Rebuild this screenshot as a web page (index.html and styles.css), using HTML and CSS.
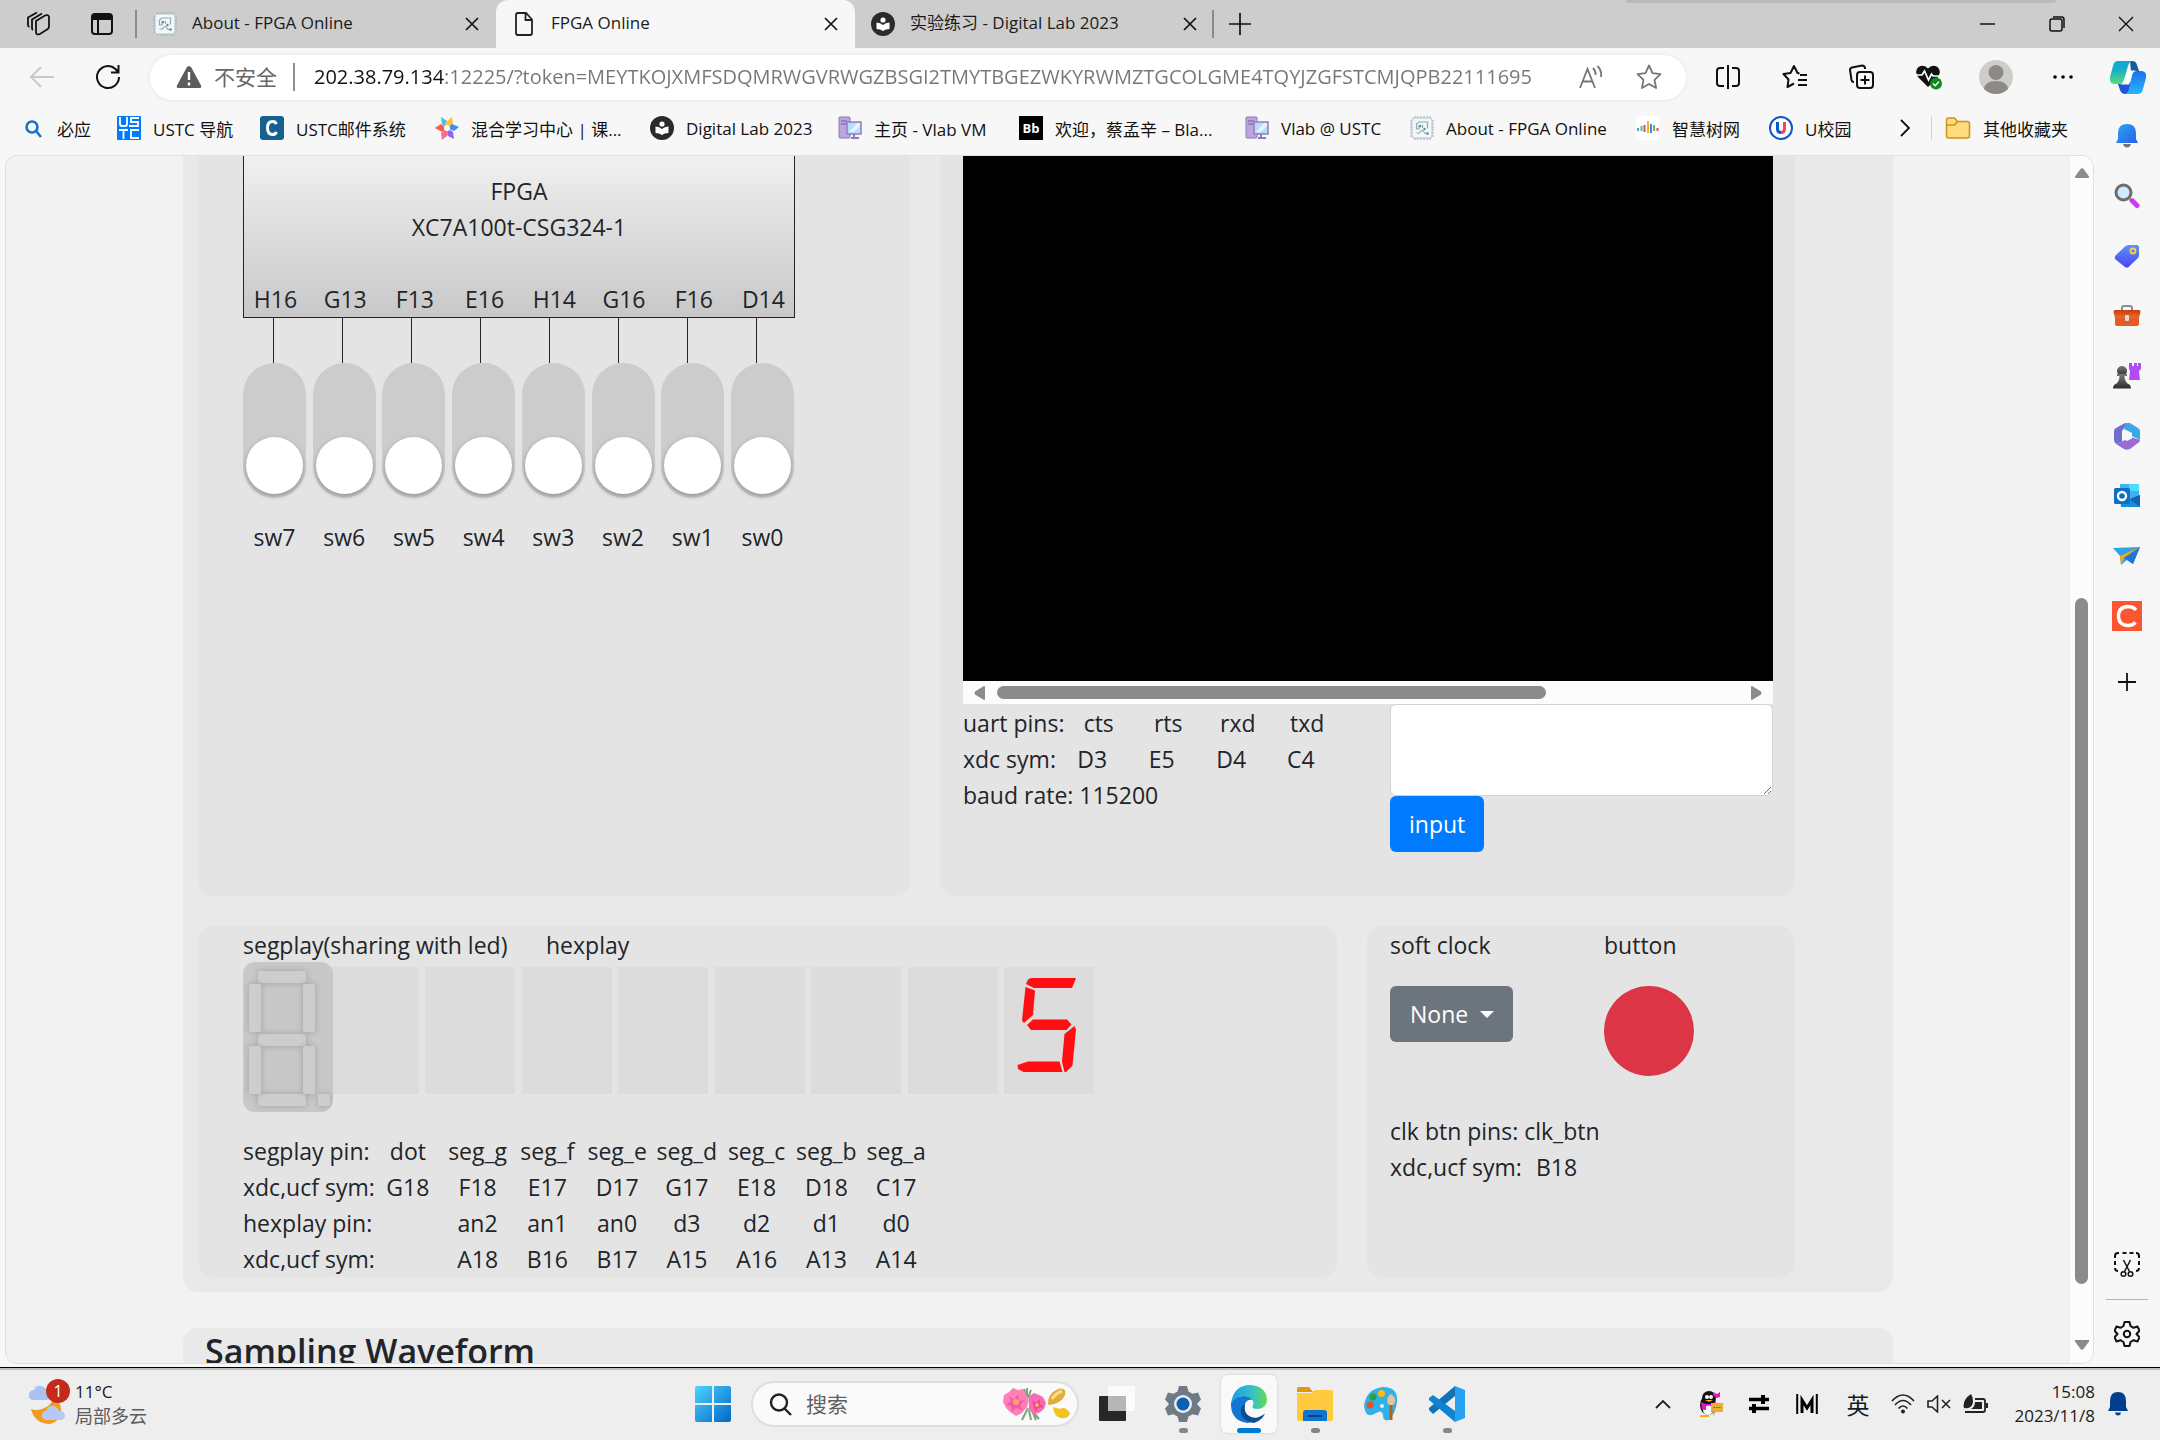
FILE: index.html
```html
<!DOCTYPE html>
<html lang="zh-CN">
<head>
<meta charset="utf-8">
<title>FPGA Online</title>
<link rel="stylesheet" href="styles.css">
</head>
<body>
<svg class="defs" aria-hidden="true">
  <defs>
    <linearGradient id="blueGrad" x1="0" y1="0" x2="1" y2="1"><stop offset="0" stop-color="#4cd3ff"/><stop offset="1" stop-color="#0067c6"/></linearGradient>
    <linearGradient id="bellGrad" x1="0" y1="0" x2="1" y2="1"><stop offset="0" stop-color="#28a9ea"/><stop offset="1" stop-color="#2a5df0"/></linearGradient>
    <linearGradient id="tagGrad" x1="0" y1="0" x2="0" y2="1"><stop offset="0" stop-color="#5b95fb"/><stop offset="1" stop-color="#4a43ee"/></linearGradient>
    <linearGradient id="caseGrad" x1="0" y1="0" x2="0" y2="1"><stop offset="0" stop-color="#c4410b"/><stop offset="1" stop-color="#f06a30"/></linearGradient>
    <linearGradient id="edgeTop" x1="0" y1="0" x2="1" y2="0"><stop offset="0" stop-color="#1b9de2"/><stop offset=".6" stop-color="#35c1c8"/><stop offset="1" stop-color="#66dc4c"/></linearGradient>
    <linearGradient id="copA" x1="0" y1="0" x2="0" y2="1"><stop offset="0" stop-color="#12a5d8"/><stop offset=".4" stop-color="#18afc8"/><stop offset="1" stop-color="#55dd78"/></linearGradient>
    <linearGradient id="copB" x1="0" y1="0" x2="0" y2="1"><stop offset="0" stop-color="#1c6ff0"/><stop offset="1" stop-color="#25b8fb"/></linearGradient>
    <linearGradient id="darkGrad" x1="0" y1="0" x2="0" y2="1"><stop offset="0" stop-color="#7a7a7a"/><stop offset="1" stop-color="#2d2d2d"/></linearGradient>
    <symbol id="i-chip" viewBox="0 0 24 24"><path d="M5 0v24M8 0v24M11 0v24M14 0v24M17 0v24M20 0v24M0 5h24M0 8h24M0 11h24M0 14h24M0 17h24M0 20h24" stroke="#a3adb2" stroke-width="1"/><rect x="2" y="2" width="20" height="20" rx="2" fill="#f1f8fa" stroke="#b4c2c8" stroke-width="1"/><path d="M17.500 12.500V6H9L6.500 8v5H9v-3.500M6.500 17h3l2-2.500h1.500l2 3H17M12.500 9v3" fill="none" stroke="#93a7b0" stroke-width="1.200"/><circle cx="10" cy="10" r="1.200" fill="#5b8796"/><circle cx="14.500" cy="13" r="1.200" fill="#5b8796"/><circle cx="17.500" cy="17.500" r="1.300" fill="#5b8796"/></symbol>
    <symbol id="i-lab" viewBox="0 0 24 24"><circle cx="12" cy="12" r="12" fill="#2b2b2d"/><circle cx="12" cy="8" r="2.600" fill="#fff"/><path d="M5.500 10.500Q9.500 10.500 12 13Q14.500 10.500 18.500 10.500V17Q14.500 17 12 19Q9.500 17 5.500 17Z" fill="#fff"/></symbol>
    <symbol id="i-x" viewBox="0 0 14 14"><path d="M1 1l12 12M13 1L1 13" stroke="#111" stroke-width="1.700" fill="none"/></symbol>
    <symbol id="i-vm" viewBox="0 0 24 24"><rect x="1" y="1" width="11" height="21" rx="1" fill="#bda4dc" stroke="#8f79b8"/><path d="M3 5h6M3 8h6" stroke="#6b5a96"/><rect x="9" y="6" width="14" height="12" fill="#b9dcfb" stroke="#8f7fc0" stroke-width="1.500"/><path d="M11 16l8-9h3v3l-6 6z" fill="#e4f3ff"/><path d="M13 22h8M16 18v4" stroke="#8f79b8" stroke-width="2"/></symbol>
    <symbol id="i-folder" viewBox="0 0 26 24"><path d="M1.500 20V4Q1.500 2 3.500 2h6l3 3.500H22.500Q24.500 5.500 24.500 7.500V20Q24.500 22 22.500 22H3.500Q1.500 22 1.500 20Z" fill="#ffdb7c" stroke="#c6951c" stroke-width="1.500"/><path d="M1.500 9h8l3-3.500" fill="none" stroke="#c6951c" stroke-width="1.500"/></symbol>
  </defs>
</svg>

<div class="desktop">
  <section class="browser">
    <header class="tabstrip">
      <div class="lead">
        <button class="ico" aria-label="工作区"><svg width="26" height="26" viewBox="0 0 26 26" fill="none" stroke="#111" stroke-width="1.800"><path d="M10 10l9-5.500q4-1.500 4 2v9q0 2-2 3l-7 4.500q-4 1.500-4-2z"/><path d="M7 19q-1-.5-1-2V8.500L16 2.500M3.500 16q-1.500-.5-1.500-2V6.500l9-5"/></svg></button>
        <button class="ico" aria-label="标签页操作"><svg width="24" height="24" viewBox="0 0 24 24" fill="none" stroke="#111" stroke-width="2"><rect x="2" y="2" width="20" height="20" rx="3"/><path d="M2 5.500h20" stroke-width="5"/><path d="M8 6v16"/></svg></button>
      </div>
      <nav class="tabs" aria-label="标签页">
        <div class="tab"><svg class="fav"><use href="#i-chip"/></svg><span class="tab-title">About - FPGA Online</span><button class="close" aria-label="关闭"><svg width="14" height="14"><use href="#i-x"/></svg></button></div>
        <div class="tab tab-active"><svg class="fav" viewBox="0 0 24 24" fill="none" stroke="#222" stroke-width="1.800"><path d="M4 3q0-2 2-2h8l6 6.500V21q0 2-2 2H6q-2 0-2-2zM13.500 1v7H20"/></svg><span class="tab-title">FPGA Online</span><button class="close" aria-label="关闭"><svg width="14" height="14"><use href="#i-x"/></svg></button></div>
        <div class="tab tab-last"><svg class="fav"><use href="#i-lab"/></svg><span class="tab-title">实验练习 - Digital Lab 2023</span><button class="close" aria-label="关闭"><svg width="14" height="14"><use href="#i-x"/></svg></button></div>
      </nav>
      <button class="ico newtab" aria-label="新建标签页"><svg width="22" height="22" viewBox="0 0 22 22" stroke="#111" stroke-width="1.700"><path d="M11 0v22M0 11h22"/></svg></button>
      <div class="winctl">
        <button class="ico" aria-label="最小化"><svg width="16" height="16" viewBox="0 0 16 16" stroke="#111" stroke-width="1.500"><path d="M0 8h15"/></svg></button>
        <button class="ico" aria-label="还原"><svg width="16" height="16" viewBox="0 0 16 16" fill="none" stroke="#111" stroke-width="1.500"><rect x="1" y="3" width="12" height="12" rx="2"/><path d="M4 1h8.500Q15 1 15 3.500V12"/></svg></button>
        <button class="ico" aria-label="关闭窗口"><svg width="16" height="16" viewBox="0 0 16 16" stroke="#111" stroke-width="1.400"><path d="M1 1l14 14M15 1L1 15"/></svg></button>
      </div>
    </header>

    <div class="toolbar">
      <button class="ico nav-btn" aria-label="后退"><svg width="26" height="24" viewBox="0 0 26 24" fill="none" stroke="#c9c9c9" stroke-width="2"><path d="M25 12H2M12 2L2 12l10 10"/></svg></button>
      <button class="ico nav-btn" aria-label="刷新"><svg width="26" height="26" viewBox="0 0 26 26" fill="none" stroke="#111" stroke-width="2"><path d="M24 13a11 11 0 1 1-3.500-8L23 8M23.500 1v7.500H16"/></svg></button>
      <div class="address">
        <svg width="26" height="24" viewBox="0 0 26 24"><path d="M13 1Q14.500 1 15.300 2.500L25 20.500Q26 23 23.500 23H2.500Q0 23 1 20.500L10.700 2.500Q11.500 1 13 1Z" fill="#5c5c5c"/><path d="M13 7v8M13 17.500v3" stroke="#fff" stroke-width="2.400"/></svg>
        <span class="insecure">不安全</span>
        <input class="url" type="text" aria-label="地址" value="202.38.79.134:12225/?token=MEYTKOJXMFSDQMRWGVRWGZBSGI2TMYTBGEZWKYRWMZTGCOLGME4TQYJZGFSTCMJQPB22111695">
        <button class="ico" aria-label="朗读"><svg width="24" height="24" viewBox="0 0 24 24" fill="none" stroke="#767676" stroke-width="1.800"><path d="M1 23L8.500 4 16 23M4 16.500h9M14 3q3 3 2.500 7M18.500 1q4.500 4.500 3.500 11"/></svg></button>
        <button class="ico" aria-label="收藏"><svg width="26" height="26" viewBox="0 0 26 26" fill="none" stroke="#767676" stroke-width="1.800" stroke-linejoin="round"><path d="M13 1.500l3.500 7.600 8 1-6 5.700 1.600 8.200L13 20l-7.100 4 1.600-8.200-6-5.700 8-1z"/></svg></button>
      </div>
      <div class="tools">
        <button class="ico" aria-label="分屏"><svg width="26" height="26" viewBox="0 0 26 26" fill="none" stroke="#111" stroke-width="2"><path d="M9 4H5Q2 4 2 7v12q0 3 3 3h4M17 4h4q3 0 3 3v12q0 3-3 3h-4M13 1v24"/></svg></button>
        <button class="ico" aria-label="收藏夹"><svg width="26" height="26" viewBox="0 0 26 26" fill="none" stroke="#111" stroke-width="2" stroke-linejoin="round"><path d="M17.500 9.500L15.500 9 12 2 8.500 9 1.500 10l5 5.500L5.500 23l6.500-3.500M18 11h7M16 16h9M16 21h9"/></svg></button>
        <button class="ico" aria-label="集锦"><svg width="26" height="26" viewBox="0 0 26 26" fill="none" stroke="#111" stroke-width="2"><rect x="8" y="8" width="16" height="16" rx="3"/><path d="M16 11.500v9M11.500 16h9M5 18q-2 0-2.500-2L1 6q0-2 2-2.500L13 1.500q2.500 0 3 2.500v1"/></svg></button>
        <button class="ico" aria-label="浏览器概要"><svg width="28" height="26" viewBox="0 0 28 26"><path d="M13 23L3 13Q-1 7 3.500 3 9 0 13 4.500 17 0 22.500 3q4.500 4 .5 10z" fill="#111"/><path d="M0 11h7l2.500-4 4 9 3-6 1.500 2h8" fill="none" stroke="#fff" stroke-width="1.700"/><circle cx="21" cy="19.500" r="6" fill="#0f8a1c"/><path d="M18 19.500l2.200 2.200 3.600-4" fill="none" stroke="#fff" stroke-width="1.500"/></svg></button>
        <button class="ico" aria-label="用户"><svg width="34" height="34" viewBox="0 0 34 34"><circle cx="17" cy="17" r="17" fill="#cfcdca"/><circle cx="17" cy="12.500" r="7.500" fill="#8c8986"/><path d="M5 29q1-8 12-8t12 8q-5 5-12 5t-12-5z" fill="#8c8986"/></svg></button>
        <button class="ico" aria-label="更多"><svg width="20" height="4" viewBox="0 0 20 4"><circle cx="2" cy="2" r="1.800"/><circle cx="10" cy="2" r="1.800"/><circle cx="18" cy="2" r="1.800"/></svg></button>
        <button class="ico copilot" aria-label="Copilot"><svg width="36" height="33" viewBox="0 0 36 33"><path d="M20 0h2q4 0 5 4l2 6h-8z" fill="#0f5f9e"/><path d="M8 23l2 6q1.500 4 5 4h3l3-12z" fill="#2352d8"/><path d="M8 0h14q-3 1-4 5l-4 14q-1 4-5 4H5q-6 0-5-7L3 5q1-5 5-5z" fill="url(#copA)"/><path d="M28 33H15q3-1 4-5l3-14q1-4 5-4h4q6 0 5 7l-3 11q-1 5-5 5z" fill="url(#copB)"/><path d="M21 9.500h6q-4 0-5 4.500l-3 9.500h-9q3-.5 4-4.500l2.500-7q1-2.500 4.500-2.500z" fill="#fafcff"/></svg></button>
      </div>
    </div>

    <div class="below">
      <div class="pane">
        <nav class="bookmarks" aria-label="收藏夹栏">
          <div class="marks">
            <a class="mark" href="#"><svg class="fav" viewBox="0 0 24 24" fill="none" stroke="#1a72c8" stroke-width="2.600"><circle cx="11" cy="11" r="5.500"/><path d="M15 15l5 6"/></svg>必应</a>
            <a class="mark" href="#"><svg class="fav" viewBox="0 0 24 24"><rect width="24" height="24" rx="1" fill="#007bff"/><path d="M3 1v7q0 2 2 2h3q2 0 2-2V1M22 2h-8v4h7v4h-9M2 14h9M6.500 14v9M22 14h-8v8h8" fill="none" stroke="#fff" stroke-width="1.800"/></svg>USTC 导航</a>
            <a class="mark" href="#"><svg class="fav" viewBox="0 0 24 24"><rect width="24" height="24" rx="3" fill="#14618f"/><path d="M16.500 8Q15 5 12 5.500 7.500 6 7.500 12T12 18.500q3 .5 4.500-2.500" fill="none" stroke="#fff" stroke-width="3"/></svg>USTC邮件系统</a>
            <a class="mark" href="#"><svg class="fav" viewBox="0 0 24 24"><path d="M12 12L7 8 6 1l6 4z" fill="#4cb5f5"/><path d="M12 12l-2-5 7-6 1 7z" fill="#ffc533"/><path d="M12 12l5-4 7 3-5 4z" fill="#3f8cf0"/><path d="M12 12l6 4 1 7-6-3z" fill="#8d6be8"/><path d="M12 12l1 7-6 5-1-7z" fill="#f76b8c"/><path d="M12 12l-5 4-7-4 6-4z" fill="#fa5b4a"/><circle cx="12" cy="12" r="3" fill="#fff"/></svg>混合学习中心 | 课...</a>
            <a class="mark" href="#"><svg class="fav"><use href="#i-lab"/></svg>Digital Lab 2023</a>
            <a class="mark" href="#"><svg class="fav"><use href="#i-vm"/></svg>主页 - Vlab VM</a>
            <a class="mark" href="#"><span class="fav bb">Bb</span>欢迎，蔡孟辛 – Bla...</a>
            <a class="mark" href="#"><svg class="fav"><use href="#i-vm"/></svg>Vlab @ USTC</a>
            <a class="mark" href="#"><svg class="fav"><use href="#i-chip"/></svg>About - FPGA Online</a>
            <a class="mark" href="#"><svg class="fav" viewBox="0 0 24 24"><rect width="24" height="24" rx="5" fill="#fff"/><path d="M2 12v3" stroke="#4aa3f0" stroke-width="2"/><path d="M5.500 10v5M18 9v6" stroke="#5cc26c" stroke-width="2"/><path d="M8.500 9v7M21.500 12v3" stroke="#e54848" stroke-width="2"/><path d="M12 5v12" stroke="#f3b22a" stroke-width="2"/><path d="M15 8v9" stroke="#3a8ee8" stroke-width="2"/></svg>智慧树网</a>
            <a class="mark" href="#"><svg class="fav" viewBox="0 0 24 24"><circle cx="12" cy="12" r="11" fill="#fff" stroke="#0c5bc4" stroke-width="2"/><path d="M8.500 6v7q0 3.500 3.500 3.500" fill="none" stroke="#0c5bc4" stroke-width="3"/><path d="M15.500 6v7q0 3.500-3.500 3.500" fill="none" stroke="#f2484b" stroke-width="3"/></svg>U校园</a>
          </div>
          <button class="ico more" aria-label="更多收藏"><svg width="12" height="18" viewBox="0 0 12 18" fill="none" stroke="#111" stroke-width="1.800"><path d="M2 1l8 8-8 8"/></svg></button>
          <a class="mark others" href="#"><svg width="26" height="24"><use href="#i-folder"/></svg>其他收藏夹</a>
        </nav>

        <div class="frame">
          <main class="page">
            <div class="container board">
              <div class="row-top">
                <section class="card card-top">
                  <div class="fpga">
                    <div>FPGA</div>
                    <div>XC7A100t-CSG324-1</div>
                    <div class="slots pins"><span>H16</span><span>G13</span><span>F13</span><span>E16</span><span>H14</span><span>G16</span><span>F16</span><span>D14</span></div>
                  </div>
                  <div class="wires"><i></i><i></i><i></i><i></i><i></i><i></i><i></i><i></i></div>
                  <div class="slots">
                    <label class="sw"><input type="checkbox">sw7</label>
                    <label class="sw"><input type="checkbox">sw6</label>
                    <label class="sw"><input type="checkbox">sw5</label>
                    <label class="sw"><input type="checkbox">sw4</label>
                    <label class="sw"><input type="checkbox">sw3</label>
                    <label class="sw"><input type="checkbox">sw2</label>
                    <label class="sw"><input type="checkbox">sw1</label>
                    <label class="sw"><input type="checkbox">sw0</label>
                  </div>
                </section>
                <section class="card card-top card-uart">
                  <div class="screen"></div>
                  <div class="hscroll"><svg width="11" height="14" viewBox="0 0 11 14"><path d="M11 1v12q0 1-1 1L1 8.500Q0 7 1 5.500L10 0q1 0 1 1z" fill="#8b8b8b"/></svg><span class="htrack"><span class="hthumb"></span></span><svg width="11" height="14" viewBox="0 0 11 14"><path d="M0 1v12q0 1 1 1l9-5.500q1-1.500 0-3L1 0Q0 0 0 1z" fill="#8b8b8b"/></svg></div>
                  <div class="uart">
                    <div>
                      <table class="uart-pins">
                        <tr><th scope="row">uart pins:</th><td>cts</td><td>rts</td><td>rxd</td><td>txd</td></tr>
                        <tr class="sym"><th scope="row">xdc sym:</th><td>D3</td><td>E5</td><td>D4</td><td>C4</td></tr>
                      </table>
                      <div>baud rate: 115200</div>
                    </div>
                    <form class="uart-form">
                      <textarea aria-label="uart input"></textarea>
                      <button class="btn btn-primary" type="button">input</button>
                    </form>
                  </div>
                </section>
              </div>
              <div class="row-bottom">
                <section class="card">
                  <div class="heads"><span>segplay(sharing with led)</span><span>hexplay</span></div>
                  <div class="displays">
                    <svg class="seg" width="90" height="150" viewBox="0 0 90 150"><g fill="#cdcdcd"><rect x="15" y="9" width="48" height="12" rx="2"/><rect x="15" y="72" width="48" height="12" rx="2"/><rect x="15" y="132" width="48" height="12" rx="2"/><rect x="6" y="22" width="12" height="48" rx="2"/><rect x="60" y="22" width="12" height="48" rx="2"/><rect x="6" y="84" width="12" height="48" rx="2"/><rect x="60" y="84" width="12" height="48" rx="2"/><rect x="75" y="132" width="12" height="12" rx="2"/></g></svg>
                    <div class="hexes"><i></i><i></i><i></i><i></i><i></i><i></i><i></i>
                      <svg width="90" height="127" viewBox="0 0 90 127" role="img" aria-label="5" fill="#ff0f12"><path d="M27 11H72L68 21H30L22 17 24 12.500zM21.500 20L31 23.500 29 48 20 56 18 53.500zM29 52.500H63L67.500 57.500 62.500 63H27L23 58zM70.500 59L72 62.500 68.500 98.500 62 105H60.500L58 94.500 60.500 67zM24 94.500H55.500L58.500 105H19.500L14 102 13.500 98z"/></svg>
                    </div>
                  </div>
                  <table class="seg-pins">
                    <tr><th scope="row">segplay pin:</th><td>dot</td><td>seg_g</td><td>seg_f</td><td>seg_e</td><td>seg_d</td><td>seg_c</td><td>seg_b</td><td>seg_a</td></tr>
                    <tr><th scope="row">xdc,ucf sym:</th><td>G18</td><td>F18</td><td>E17</td><td>D17</td><td>G17</td><td>E18</td><td>D18</td><td>C17</td></tr>
                    <tr><th scope="row">hexplay pin:</th><td></td><td>an2</td><td>an1</td><td>an0</td><td>d3</td><td>d2</td><td>d1</td><td>d0</td></tr>
                    <tr><th scope="row">xdc,ucf sym:</th><td></td><td>A18</td><td>B16</td><td>B17</td><td>A15</td><td>A16</td><td>A13</td><td>A14</td></tr>
                  </table>
                </section>
                <section class="card card-clock">
                  <div class="clock-grid">
                    <div class="col"><label for="clk">soft clock</label><div class="drop"><select id="clk"><option>None</option></select></div></div>
                    <div class="col"><span id="btn-label">button</span><button class="round" aria-labelledby="btn-label"></button></div>
                  </div>
                  <div>clk btn pins: clk_btn</div>
                  <div class="clk-sym"><span>xdc,ucf sym:</span><span>B18</span></div>
                </section>
              </div>
            </div>
            <section class="container wave"><h2>Sampling Waveform</h2></section>
          </main>
          <div class="vscroll"><svg width="14" height="10" viewBox="0 0 14 10"><path d="M5.500 1Q7 -.5 8.500 1L14 8.500V10H0V8.500z" fill="#8b8b8b"/></svg><span class="vtrack"><span class="vthumb"></span></span><svg width="14" height="10" viewBox="0 0 14 10"><path d="M5.500 9Q7 10.500 8.500 9L14 1.500V0H0V1.500z" fill="#8b8b8b"/></svg></div>
        </div>
      </div>

      <aside class="sidebar">
        <button class="ico side" aria-label="通知"><svg width="24" height="26" viewBox="0 0 24 26"><path d="M12 1Q21 1 21 10v6l2 4H1l2-4v-6Q3 1 12 1z" fill="url(#bellGrad)"/><path d="M8 21h8q-1 3.500-4 3.500T8 21z" fill="#777"/></svg></button>
        <button class="ico side" aria-label="搜索"><svg width="26" height="26" viewBox="0 0 26 26"><path d="M16 16l3 3" stroke="#666" stroke-width="3"/><path d="M18.500 18l4.500 4.500" stroke="#c93cf0" stroke-width="5" stroke-linecap="round"/><circle cx="9.500" cy="9.500" r="7.500" fill="#cdeaff" stroke="#6d6d6d" stroke-width="3"/></svg></button>
        <button class="ico side" aria-label="购物"><svg width="26" height="26" viewBox="0 0 26 26"><path d="M1.500 12.500L11 3.500Q12.500 2 14.500 2H23Q25 2 25 4v8q0 2-1.500 3.500l-9 8.500q-1.500 1.500-3.500 0L1.500 16.500Q0 14.500 1.500 12.500z" fill="url(#tagGrad)"/><circle cx="19" cy="8" r="2.500" fill="none" stroke="#ffd23e" stroke-width="1.800"/></svg></button>
        <button class="ico side" aria-label="工具"><svg width="28" height="24" viewBox="0 0 28 24"><path d="M9 6V4q0-2 2-2h6q2 0 2 2v2" fill="none" stroke="#8d8d8d" stroke-width="2"/><path d="M2 12h24v8q0 2-2 2H4q-2 0-2-2z" fill="#e65b25"/><path d="M2 6h24q1.500 0 1.500 2L26 14H2L.5 8Q.5 6 2 6z" fill="url(#caseGrad)"/><rect x="12" y="11" width="4" height="6" rx="1" fill="#ddd"/></svg></button>
        <button class="ico side" aria-label="游戏"><svg width="28" height="28" viewBox="0 0 28 28"><path d="M16 1h3v3h2V1h3v3h1V1h3v6l-2 2 1 9H16l1-9-1-2z" fill="#b04cf2"/><circle cx="9" cy="9" r="5" fill="url(#darkGrad)"/><path d="M4 12h10v2h-2.500q0 5 3 7.500 3.500 1 3.500 5H0q0-4 3.500-5 3-2.500 3-7.500H4z" fill="url(#darkGrad)"/></svg></button>
        <button class="ico side" aria-label="Microsoft 365"><svg width="26" height="28" viewBox="0 0 26 28"><path d="M11 1h5l8 5q2 1 2 3v9l-8-4v-3l-8-4z" fill="#3aa7e6"/><path d="M11 1Q12 4 8 9v11l-6 2q-2-2-2-4V9q0-2 2-3z" fill="#6f6fd0"/><path d="M2 22l7-3 8-4 9 3q0 2-2 3l-8 6q-3 1.500-6 0z" fill="#9b6bd6"/><path d="M13 9l5 2.500v5L13 19l-5-2.500v-5z" fill="#f7f7f7"/></svg></button>
        <button class="ico side" aria-label="Outlook"><svg width="26" height="26" viewBox="0 0 26 26"><rect x="6" y="1" width="19" height="14" rx="1" fill="#38b6ee"/><path d="M15 1h10v7H15z" fill="#50d9ff"/><path d="M6 13l10 4 10-5v11q0 1-1 1H7z" fill="#1490df"/><path d="M26 12v12L15 16z" fill="#1066b5"/><rect y="5" width="16" height="16" rx="1.500" fill="#0f6fc4"/><circle cx="8" cy="13" r="4" fill="none" stroke="#fff" stroke-width="2.400"/></svg></button>
        <button class="ico side" aria-label="Drop"><svg width="28" height="22" viewBox="0 0 28 22"><path d="M0 3L27 2 20 19l-6-4-6 5-1-9z" fill="#2fa4ea"/><path d="M27 2L7 11l1 9 3-7z" fill="#f6a21b"/><path d="M27 2L11 13l9 6z" fill="#2473d6"/></svg></button>
        <button class="ico side" aria-label="C"><svg width="30" height="30" viewBox="0 0 30 30"><rect width="30" height="30" fill="#fc5531"/><path d="M24 9Q21 5.500 16 5.500 6.500 6 6.500 15T16 24.500q4.500 0 7.500-3" fill="none" stroke="#fff" stroke-width="3.400"/></svg></button>
        <button class="ico side plus" aria-label="自定义"><svg width="18" height="18" viewBox="0 0 18 18" stroke="#111" stroke-width="1.800"><path d="M9 0v18M0 9h18"/></svg></button>
        <div class="side-end">
          <button class="ico side" aria-label="截图"><svg width="26" height="26" viewBox="0 0 26 26" fill="none" stroke="#111" stroke-width="2"><path d="M1 6V4q0-3 3-3h1M8.500 1h4M15.500 1h4M22 1q3 0 3 3v2M1 9v4M25 9v4M1 16q0 3 3 3M25 16q0 3-3 3"/><path d="M9.500 8l6 11.500M16.500 8l-6 11.500" stroke-width="1.500"/><circle cx="9.500" cy="22" r="2.300" stroke-width="1.500"/><circle cx="16.500" cy="22" r="2.300" stroke-width="1.500"/></svg></button>
          <hr>
          <button class="ico side" aria-label="设置"><svg width="26" height="28" viewBox="0 0 26 28" fill="none" stroke="#111" stroke-width="2" stroke-linejoin="round"><path d="M10.500 2h5l1 4 3 1.800 4-1.300 2 4.200-3 3.300 3 3.300-2 4.200-4-1.300-3 1.800-1 4h-5l-1-4-3-1.800-4 1.300-2-4.200 3-3.300-3-3.300 2-4.200 4 1.300 3-1.800z"/><circle cx="13" cy="14" r="3.200"/></svg></button>
        </div>
      </aside>
    </div>
  </section>

  <footer class="taskbar">
    <div class="weather">
      <div class="weather-ico">
        <svg width="38" height="44" viewBox="0 0 38 44"><path d="M3 27q5 2 11 0 9-3 11-10 8 2 8 11 0 11-11 14Q7 42 3 27z" fill="#f39a1f"/><path d="M6 18q-6 0-5-6 1-4 5-4 2-5 7-4 5 1 6 6 4 2 3 5-1 3-4 3z" fill="#a9c2ef"/><path d="M18 38q-5-1-4-6 1-3 4-3 2-6 8-5 4 1 5 5 5 0 6 4 0 5-5 5z" fill="#b4caf4"/></svg>
        <span class="badge">1</span>
      </div>
      <div class="weather-text"><div>11°C</div><div class="muted">局部多云</div></div>
    </div>
    <div class="apps">
      <button class="app start" aria-label="开始"><svg width="36" height="36" viewBox="0 0 36 36"><path d="M2 0h15v17H0V2q0-2 2-2zM19 0h15q2 0 2 2v15H19zM0 19h17v17H2q-2 0-2-2zM19 19h17v15q0 2-2 2H19z" fill="url(#blueGrad)"/></svg></button>
      <label class="search"><svg width="23" height="23" viewBox="0 0 23 23" fill="none" stroke="#222" stroke-width="2.400"><circle cx="10" cy="9.500" r="8"/><path d="M15.500 15.500l6.500 6.500"/></svg><input type="text" placeholder="搜索" aria-label="搜索">
        <svg width="68" height="34" viewBox="0 0 68 34"><path d="M21 2l3 8M24 1v10M28 3l-3 8M19 33l6-12M36 32l-9-11M28 33l-2-10M33 33l-5-12" stroke="#7fa37a" stroke-width="2"/><path d="M1 8l5-3 4-4 5 2 5-1 3 6 3 5-2 7-5 6-6 3-6-4-4-4-3-6z" fill="#ff7fb6"/><path d="M26 9l5-3 5 2 4 2 3 6-2 6-5 4-6 1-4-5z" fill="#fb6bb0"/><path d="M6 9l5 4 4-6 1 7 6-1-5 5 3 5-7-2-4 4-1-6-5-1 5-4z" fill="#f45aa4"/><path d="M29 13l4 3 4-4v5l4 3-6 1-2 4-2-5z" fill="#e94a98"/><circle cx="13" cy="15" r="3" fill="#ffa56f"/><circle cx="34" cy="18" r="2" fill="#ffa56f"/><path d="M45 17q-1-10 10-15 9-2 7 6-4 9-16 10z" fill="#e0ac3a"/><path d="M49 12Q53 6 59 4" stroke="#fbdc8a" stroke-width="3" fill="none"/><path d="M50 20l7 2q5-3 10 4-1 6-9 5-7-1-8-11z" fill="#f0c420"/></svg>
      </label>
      <button class="app" aria-label="任务视图"><svg width="36" height="36" viewBox="0 0 36 36"><rect y="10" width="27" height="25" rx="1" fill="#272727"/><rect x="9" width="27" height="25" rx="1" fill="#fff" opacity=".75"/><rect x="9" y="10" width="18" height="15" fill="#b7b7b7"/></svg></button>
      <button class="app run" aria-label="设置"><svg width="36" height="36" viewBox="0 0 36 36"><path d="M14 0h8l1.500 5.500 4 2.300L33 6.500l3 7-4 4.500 4 4.500-3 7-5.500-1.300-4 2.300L22 36h-8l-1.500-5.500-4-2.300L3 29.500l-3-7L4 18l-4-4.500 3-7 5.500 1.300 4-2.300z" fill="#6e7b87"/><circle cx="18" cy="18" r="9" fill="#ececec"/><circle cx="18" cy="18" r="6.500" fill="#0b5fb0"/></svg></button>
      <button class="app run active" aria-label="Edge"><svg width="38" height="38" viewBox="0 0 38 38"><path d="M1 18Q4 0 20 0q16 1 17 14.500 0 9-9.500 9.500-6 0-5-3 2-2 0-6-3-4-9-4Q5 11 1 18z" fill="url(#edgeTop)"/><path d="M1 18q4-7 12.500-7 6 0 9 4-6-1-8 5-2 9 7 14 3 2 5 1-4 3-9 3Q2 36 1 21z" fill="#1277d2"/><path d="M15 19q-2 11 8 13.500 6 1 12-4-3 7-11 9.500Q9 35 11 24q1-4 4-5z" fill="#0c4c96"/></svg></button>
      <button class="app run" aria-label="文件资源管理器"><svg width="36" height="36" viewBox="0 0 36 36"><path d="M0 3q0-2 2-2h10l4 5H0z" fill="#dd9a0a"/><path d="M0 7h15l3-3h16q2 0 2 2v27q0 2-2 2H2q-2 0-2-2z" fill="#ffca3e"/><path d="M6 35V27q0-3 3-3h18q3 0 3 3v8z" fill="#0f74d1"/><path d="M11 30h14" stroke="#07417c" stroke-width="2"/></svg></button>
      <button class="app" aria-label="画图"><svg width="36" height="36" viewBox="0 0 36 36"><path d="M1 20Q3 3 20 1q15 0 14 14-1 12-8 19-6 2-6-5-1-6-7-2Q3 34 1 20z" fill="#30b1ea"/><circle cx="7" cy="19" r="3.500" fill="#e0532c"/><circle cx="10" cy="11" r="3.500" fill="#2f9e41"/><circle cx="18.500" cy="7.500" r="3.500" fill="#ffb90f"/><circle cx="19" cy="20" r="2" fill="#eee"/><path d="M28 18v16" stroke="#b2621d" stroke-width="3"/><path d="M24 16q0-6 4-8 5 3 4 8l-2 3h-4z" fill="#e6c39a"/></svg></button>
      <button class="app run" aria-label="VS Code"><svg width="36" height="36" viewBox="0 0 36 36"><path d="M26 0v10L4 28l-4-4v-2z" fill="#1272b8"/><path d="M26 36V25L4 9 0 12v2z" fill="#0d85d3"/><path d="M26 0l10 4v28l-10 4z" fill="#27a0f0"/></svg></button>
    </div>
    <div class="tray">
      <button class="ico t-chev" aria-label="显示隐藏的图标"><svg width="16" height="10" viewBox="0 0 16 10" fill="none" stroke="#222" stroke-width="1.800"><path d="M1 9l7-7 7 7"/></svg></button>
      <button class="ico t-app" aria-label="QQ"><svg width="24" height="26" viewBox="0 0 24 26"><ellipse cx="9" cy="14" rx="8" ry="10" fill="#111"/><circle cx="10" cy="7" r="7" fill="#111"/><ellipse cx="9" cy="19" rx="5" ry="5" fill="#fff"/><path d="M2 11q7 4 14 0v3l-9 1v4H3z" fill="#e815b9"/><path d="M14 1l4 2 3-2v5l-4 1-3-3z" fill="#e815b9"/><circle cx="8" cy="6" r="2" fill="#fff"/><circle cx="12" cy="6" r="2" fill="#fff"/><path d="M6 9h8l-4 2z" fill="#f8b418"/><path d="M1 24h9v2H1z" fill="#f8a818"/><path d="M12 12h12v9h-7l-3 4v-4h-2z" fill="#e8ae35"/><path d="M14.500 16.500h7" stroke="#7d5310" stroke-dasharray="1.500 1.200"/></svg></button>
      <button class="ico t-app" aria-label="调节"><svg width="22" height="20" viewBox="0 0 22 20" stroke="#000" stroke-width="3.500"><path d="M1 5.500h20M1 14.500h20"/><path d="M15 1v9M6 10v9" stroke-width="4"/></svg></button>
      <button class="ico t-app" aria-label="M"><svg width="22" height="20" viewBox="0 0 22 20" fill="none" stroke="#000"><path d="M1.200 0v20M20.800 0v20" stroke-width="2"/><path d="M6 19V6l5 8 5-8v13" stroke-width="3"/></svg></button>
      <button class="t-ime" aria-label="输入法">英</button>
      <button class="ico t-sys" aria-label="网络"><svg width="24" height="20" viewBox="0 0 24 20" fill="none" stroke="#222" stroke-width="1.700"><path d="M1 7q11-12 22 0M4 11q8-9 16 0M7.500 14.500q4.500-5 9 0"/><circle cx="12" cy="17.500" r="2" fill="#222" stroke="none"/></svg></button>
      <button class="ico t-sys" aria-label="静音"><svg width="24" height="18" viewBox="0 0 24 18" fill="none" stroke="#222" stroke-width="1.600"><path d="M1 6h4l5.500-5v16L5 12H1zM15 5l8 8M23 5l-8 8"/></svg></button>
      <button class="ico t-sys" aria-label="电池"><svg width="25" height="20" viewBox="0 0 25 20"><path d="M1 14Q-1 6 8 0q3 5 1.500 10T1 14z" fill="#222"/><path d="M12 5h8q2 0 2 2v9q0 2-2 2H2" fill="none" stroke="#222" stroke-width="1.800"/><path d="M12 8h7v7H8q4-2 4-7z" fill="#222"/><path d="M23 9h2v5h-2z" fill="#222"/></svg></button>
      <div class="clock"><div>15:08</div><div>2023/11/8</div></div>
      <button class="ico t-bell" aria-label="通知"><svg width="20" height="24" viewBox="0 0 20 24" fill="#003e8f"><path d="M10 0q8 0 8 9v6l2 4H0l2-4V9q0-9 8-9zM7 20.500h6q-.5 3-3 3t-3-3z"/></svg></button>
    </div>
  </footer>
</div>
</body>
</html>
```

FILE: styles.css
```css
:root {
  --ui: "Open Sans", "Noto Sans CJK SC", sans-serif;
  --chrome: #f7f7f7;
  --ink: #212529;
}
* { box-sizing: border-box; }
body { margin: 0; font-family: var(--ui); font-size: 17px; color: #1b1b1b; background: #eee; }
button, input, textarea, select { font-family: inherit; }
button { border: 0; padding: 0; background: none; color: inherit; }
svg { display: block; flex: none; }
.defs { position: absolute; width: 0; height: 0; }

.desktop { height: 100vh; display: flex; flex-direction: column; }
.browser { flex: 1; min-height: 0; display: flex; flex-direction: column; background: var(--chrome); }
.ico { display: flex; align-items: center; justify-content: center; flex: none; }
.fav { width: 24px; height: 24px; flex: none; }

/* tab strip */
.tabstrip { position: relative; height: 48px; flex: none; display: flex; align-items: center; background: #cdcdcd; }
.tabstrip::after { content: ""; position: absolute; top: 0; right: 104px; width: 430px; height: 3px; background: #bababa; border-radius: 0 0 6px 6px; }
.lead { width: 137px; height: 28px; display: flex; align-items: center; justify-content: space-between; padding: 0 21px 0 26px; border-right: 2px solid #8a8a8a; }
.tabs { display: flex; align-self: stretch; }
.tab { width: 359px; display: flex; align-items: center; gap: 15px; padding: 0 16px; }
.tab-active { background: var(--chrome); border-radius: 12px 12px 0 0; }
.tab-title { flex: 1; white-space: nowrap; line-height: 24px; padding-bottom: 2px; }
.close { display: flex; padding: 1px; }
.tab-last { position: relative; }
.tab-last::after { content: ""; position: absolute; right: 0; top: 10px; height: 28px; border-right: 2px solid #8a8a8a; }
.newtab { margin-left: 15px; }
.winctl { margin-left: auto; display: flex; }
.winctl .ico { width: 69px; height: 48px; }

/* toolbar */
.toolbar { height: 58px; flex: none; display: flex; align-items: center; padding-left: 9px; }
.nav-btn { width: 66px; height: 48px; }
.address { flex: 1; height: 45px; margin-left: 9px; padding: 0 24px 0 26px; display: flex; align-items: center; background: #fff; border-radius: 23px; box-shadow: 0 0 4px #e3e3e3; }
.address .ico { width: 58px; margin-right: -16px; }
.address .ico + .ico { margin-right: -16px; margin-left: 16px; }
.insecure { margin-left: 12px; padding-right: 16px; font-size: 21px; line-height: 28px; color: #666; border-right: 2px solid #8f8f8f; }
.url { flex: 1; min-width: 0; margin-left: 19px; padding: 0; border: 0; font-size: 20px; line-height: 30px; color: transparent; background: linear-gradient(90deg, #111 131px, #767676 131px); -webkit-background-clip: text; background-clip: text; }
.tools { display: flex; padding-left: 8px; }
.tools .ico { width: 67px; height: 48px; }
.tools .copilot { width: 64px; }

/* bookmarks */
.below { flex: 1; min-height: 0; display: flex; }
.pane { flex: 1; min-width: 0; display: flex; flex-direction: column; }
.bookmarks { height: 49px; flex: none; display: flex; align-items: center; justify-content: space-between; padding: 0 21px 5px; }
.marks { display: grid; grid-template-columns: 96px 143px 175px 215px 188px 181px 226px 165px 226px 133px 86px; }
.mark { display: flex; align-items: center; gap: 12px; color: #111; text-decoration: none; white-space: nowrap; }
.bb { display: flex; align-items: center; justify-content: center; background: #000; color: #fff; font-size: 13px; font-weight: 700; }
.more { margin-left: auto; padding-right: 20px; }
.others { height: 24px; padding: 0 5px 0 13px; border-left: 1px solid #d4d4d4; }

/* page frame */
.frame { flex: 1; min-height: 0; margin: 0 0 3px 5px; display: flex; background: #f2f2f2; border: 1px solid #e0e0e0; border-radius: 12px; overflow: hidden; }
.page { flex: 1; min-width: 0; overflow: hidden; font-size: 23px; line-height: 36px; color: var(--ink); }
.vscroll { width: 23px; flex: none; padding: 12px 0 13px; display: flex; flex-direction: column; align-items: center; background: #fcfcfc; }
.vtrack { flex: 1; display: flex; flex-direction: column; justify-content: flex-end; padding-bottom: 56px; }
.vthumb { width: 13px; height: 62%; border-radius: 7px; background: #8b8b8b; }

.container { max-width: 1710px; margin: 0 auto; background: #e9e9e9; }
.board { padding: 0 98px 15px 15px; border-radius: 0 0 15px 15px; }
.row-top { display: grid; grid-template-columns: 712fr 855fr; gap: 30px; }
.row-bottom { display: grid; grid-template-columns: 1139fr 428fr; gap: 30px; margin-top: 30px; }
.card { min-height: 350px; padding: 1px 45px 0; background: #e4e4e4; border-radius: 15px; }
.card-top { min-height: 740px; padding-top: 0; border-radius: 0 0 15px 15px; }
.card-uart, .card-clock { padding-left: 23px; padding-right: 22px; }

.fpga { width: 552px; padding-top: 17px; text-align: center; border: 1px solid var(--ink); border-top: 0; background: linear-gradient(#f0f0f0, #c8c8c8); }
.slots { width: 551px; display: flex; justify-content: space-between; }
.slots > * { width: 63px; text-align: center; }
.pins { padding-top: 36px; }
.wires { display: grid; grid-template-columns: repeat(8, 63px); gap: 6px; }
.wires i { height: 45px; width: 31px; border-right: 1px solid var(--ink); }
.sw { display: flex; flex-direction: column; align-items: center; gap: 21px; }
.sw input { appearance: none; width: 63px; height: 135px; margin: 0; padding: 0 3px 4px; display: flex; align-items: flex-end; border-radius: 32px; background: #ccc; }
.sw input::before { content: ""; width: 57px; height: 57px; border-radius: 50%; background: #fff; box-shadow: 0 2px 5px rgba(0, 0, 0, .3); }

.screen { height: 525px; background: #000; }
.hscroll { height: 23px; padding: 0 11px; display: flex; align-items: center; gap: 12px; background: #fcfcfc; }
.htrack { flex: 1; }
.hthumb { display: block; width: 74%; height: 13px; border-radius: 7px; background: #8b8b8b; }
.uart { display: grid; grid-template-columns: 427fr 383fr; }
table { border-collapse: collapse; table-layout: fixed; }
th, td { padding: 0; font-weight: 400; height: 36px; text-align: center; white-space: nowrap; }
th { text-align: left; }
.uart-pins { width: 379px; margin-top: 1px; }
.uart-pins th { width: 101px; }
.uart-pins .sym td { padding-right: 13px; }
.uart-form { display: flex; flex-direction: column; align-items: flex-start; }
textarea { display: block; width: 100%; height: 92px; border: 1px solid #ced4da; border-radius: 6px; background: #fff; resize: both; }
.btn { height: 56px; padding: 0 19px; font-size: 23px; color: #fff; border-radius: 6px; }
.btn-primary { background: #007bff; }

.heads { display: grid; grid-template-columns: 303px 1fr; }
.displays { display: flex; align-items: flex-start; height: 171px; margin-top: -1px; }
.seg { position: relative; background: #c8c8c8; border-radius: 12px; }
.seg rect { filter: drop-shadow(0 0 3px rgba(0, 0, 0, .2)); }
.hexes { width: 765px; margin: 5px 0 0 -4px; display: flex; justify-content: space-between; }
.hexes > * { width: 90px; height: 127px; background: #dcdcdc; }
.seg-pins { width: 688px; }
.seg-pins th { width: 130px; }

.clock-grid { display: grid; grid-template-columns: 214px 1fr; margin-bottom: 37px; }
.col { display: flex; flex-direction: column; align-items: flex-start; gap: 23px; }
.drop { display: grid; align-items: center; }
.drop > *, .drop::after { grid-area: 1 / 1; }
.drop::after { content: ""; justify-self: end; margin-right: 19px; border: 7px solid transparent; border-top-color: #fff; border-bottom: 0; pointer-events: none; }
select { appearance: none; width: 123px; height: 56px; padding: 0 20px; border: 0; border-radius: 6px; background: #6c757d; color: #fff; font-size: 23px; }
.round { width: 90px; height: 90px; border-radius: 50%; background: #dc3545; }
.clk-sym { display: grid; grid-template-columns: 146px 1fr; }

.wave { margin-top: 36px; min-height: 300px; padding: 0 22px; border-radius: 15px; }
.wave h2 { margin: 0; font-size: 34px; line-height: 47px; font-weight: 600; }

/* sidebar */
.sidebar { width: 66px; flex: none; display: flex; flex-direction: column; align-items: center; }
.side { width: 60px; height: 60px; }
.plus { margin-top: 6px; }
.side-end { margin-top: auto; padding-bottom: 3px; }
.side-end hr { width: 42px; margin: 4px auto; border: 0; border-top: 1px solid #b5b5b5; }

/* taskbar */
.taskbar { height: 73px; flex: none; display: grid; grid-template-columns: 1fr auto 1fr; align-items: center; background: #eee; border-top: 1px solid #000; box-shadow: inset 0 2px #bfc0bd; }
.weather { display: flex; align-items: center; gap: 9px; padding-left: 28px; line-height: 24px; }
.weather-ico { position: relative; }
.badge { position: absolute; top: -3px; right: -4px; width: 24px; height: 24px; border-radius: 50%; background: #c42b1c; color: #fff; font-size: 16px; text-align: center; }
.muted { color: #5c5c5c; font-size: 18px; }
.apps { display: flex; align-items: center; gap: 10px; }
.app { width: 56px; height: 58px; display: flex; align-items: center; justify-content: center; position: relative; border-radius: 6px; }
.active { background: #f9f9f9; box-shadow: 0 0 2px #bbb; }
.run::after { content: ""; position: absolute; bottom: 0; width: 9px; height: 5px; border-radius: 3px; background: #858585; }
.active::after { width: 24px; background: #0078d4; }
.search { width: 328px; height: 46px; padding: 0 6px 0 16px; display: flex; align-items: center; gap: 14px; background: #fafafa; border: 2px solid #dedede; border-radius: 23px; }
.search input { flex: 1; min-width: 0; border: 0; padding: 0; background: none; font-size: 21px; }
.search input::placeholder { color: #5f5f5f; }
.tray { justify-self: end; display: flex; align-items: center; padding-right: 19px; }
.t-chev, .t-app { width: 48px; height: 48px; }
.t-ime { width: 54px; font-size: 23px; }
.t-sys { width: 36px; height: 48px; }
.clock { width: 102px; text-align: right; line-height: 24px; }
.t-bell { width: 46px; height: 48px; }
```
